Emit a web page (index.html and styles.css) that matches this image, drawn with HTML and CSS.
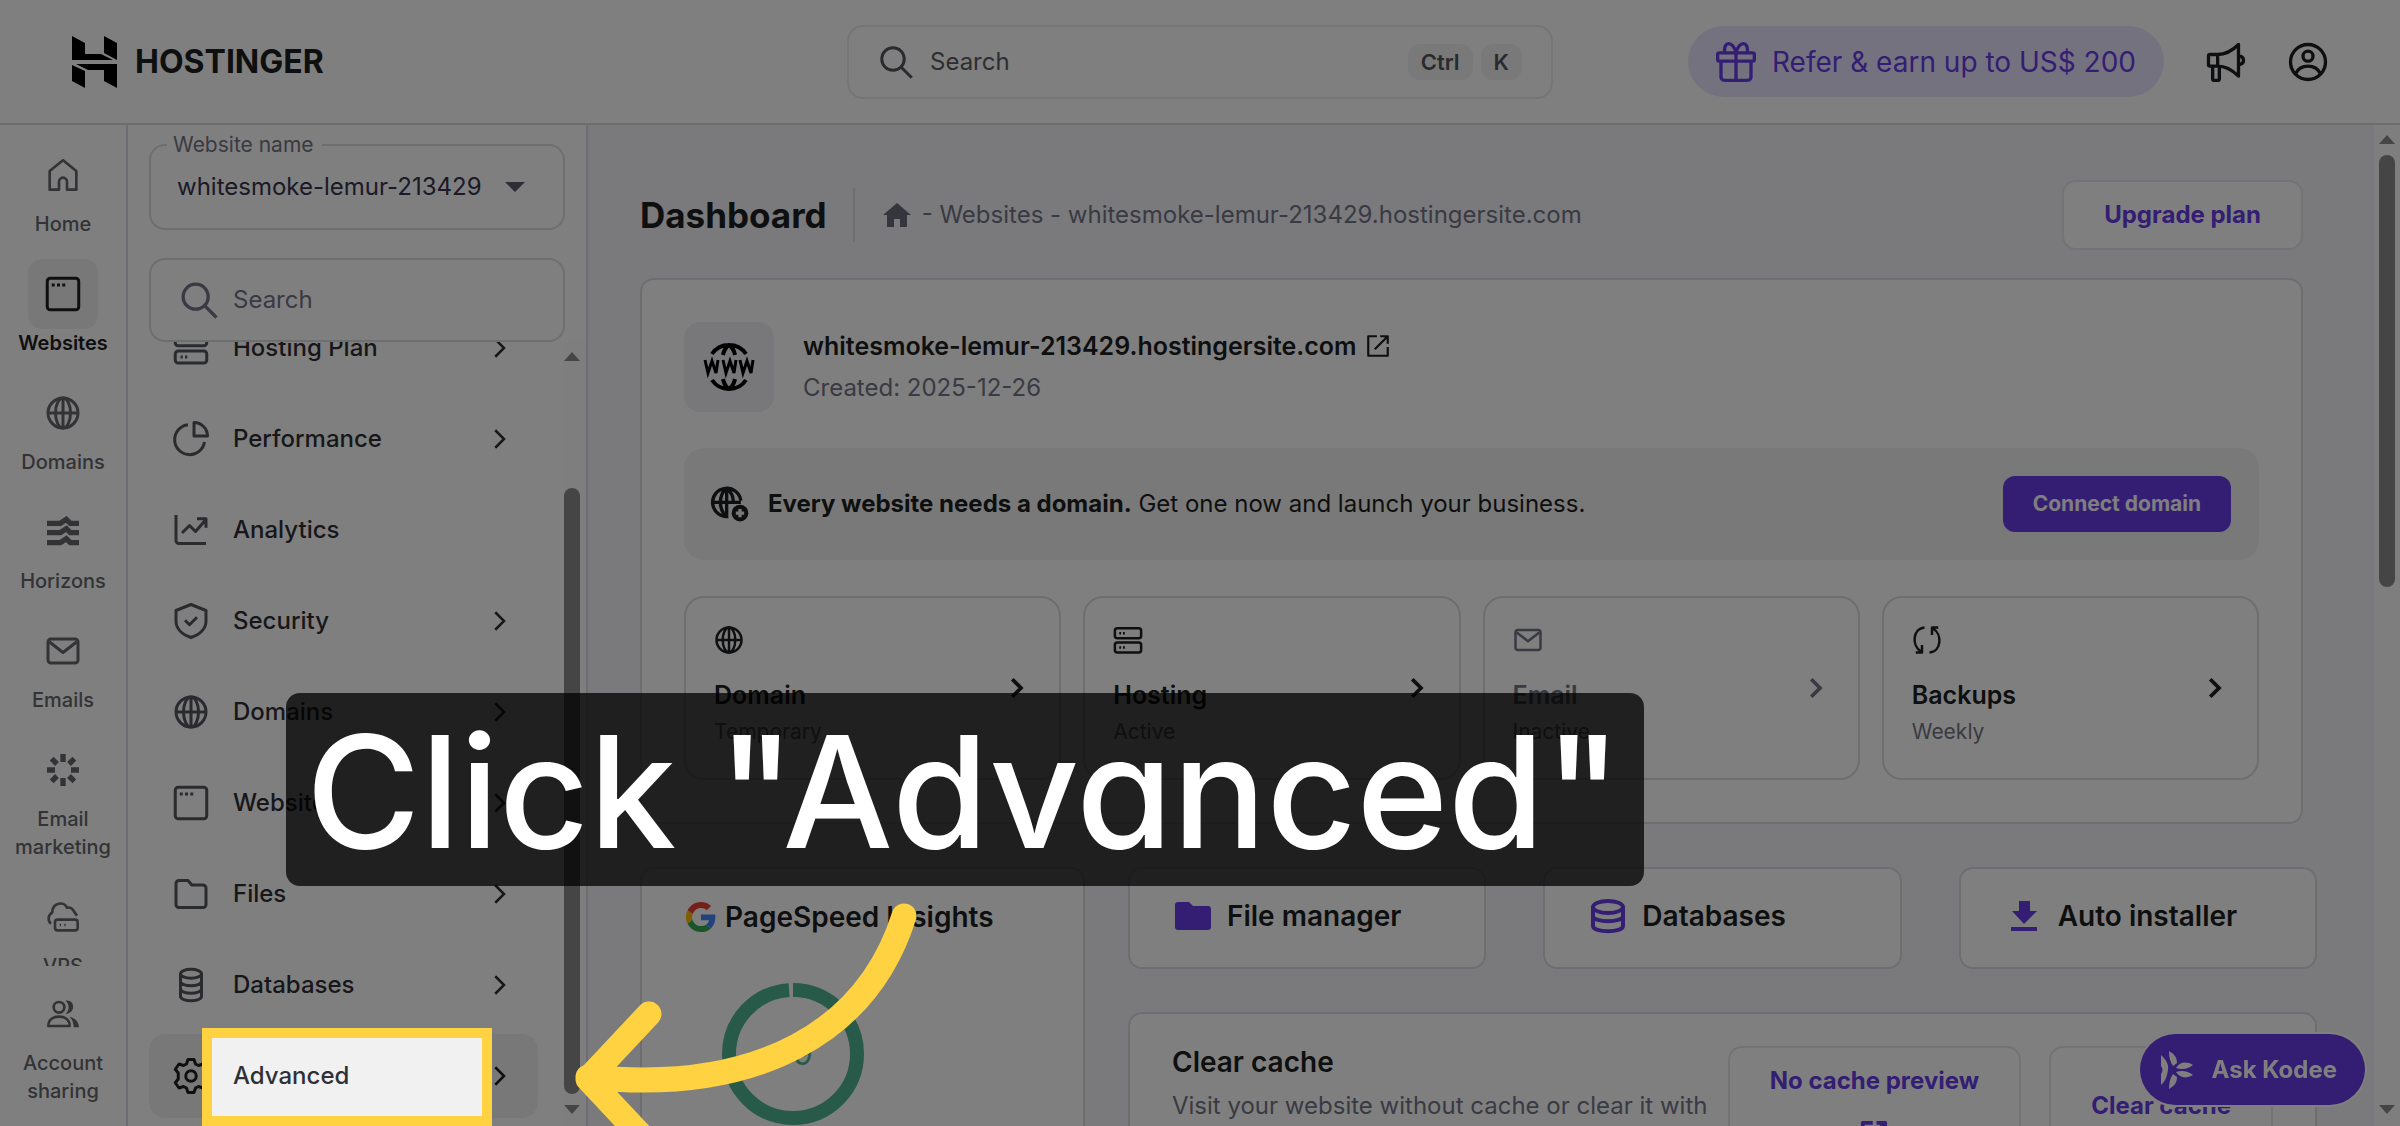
FILE: index.html
```html
<!DOCTYPE html>
<html lang="en">
<head>
    <meta charset="UTF-8">
    <meta name="viewport" content="width=device-width, initial-scale=1.0">
    <title>Dashboard - Hostinger</title>
    <link rel="stylesheet" href="styles.css">
</head>
<body>
    <!-- Shared icons -->
    <svg class="sprite" aria-hidden="true">
        <symbol id="i-search" viewBox="0 0 24 24"><circle cx="10" cy="10" r="7.5"/><path d="M15.5 15.5l7 7"/></symbol>
        <symbol id="i-chevron" viewBox="0 0 24 24"><path d="M9 5l7 7-7 7"/></symbol>
        <symbol id="i-globe" viewBox="0 0 24 24"><circle cx="12" cy="12" r="10"/><ellipse cx="12" cy="12" rx="5" ry="10"/><path d="M12 2v20M2 12h20"/></symbol>
        <symbol id="i-window" viewBox="0 0 24 24"><rect x="1.500" y="1.500" width="21" height="21" rx="2"/><path d="M4.500 6h2M8 6h2M11.500 6h2"/></symbol>
        <symbol id="i-mail" viewBox="0 0 24 24"><rect x="2" y="4" width="20" height="16" rx="2"/><path d="M3 6l9 7 9-7"/></symbol>
        <symbol id="i-server" viewBox="0 0 24 24"><rect x="1.500" y="2.500" width="21" height="8" rx="2"/><rect x="1.500" y="14" width="21" height="8" rx="2"/><path d="M5 6.500h1.500M8 6.500h1.500M5 18h1.500M8 18h1.500"/></symbol>
        <symbol id="i-external" viewBox="0 0 24 24"><path d="M11 3H3v18h18v-8M14 3h7v7M21 3L9 15"/></symbol>
    </svg>

    <header class="topbar">
        <a class="logo" href="#">
            <svg class="logo-mark" viewBox="0 0 45 52" aria-hidden="true">
                <path d="M0 0l13 7v11h16l12 6H0z"/>
                <path d="M32 0l13 7v17l-13-7z"/>
                <path d="M45 52l-13-7V34H16L4 28h41z"/>
                <path d="M13 52L0 45V29l13 6z"/>
            </svg>
            <span>HOSTINGER</span>
        </a>
        <label class="top-search">
            <svg class="icon icon-lg"><use href="#i-search"/></svg>
            <input type="text" placeholder="Search" aria-label="Search">
            <kbd>Ctrl</kbd><kbd>K</kbd>
        </label>
        <div class="top-actions">
            <button class="refer">
                <svg class="icon icon-xl" viewBox="0 0 24 24"><rect x="1" y="6.500" width="22" height="5" rx="1"/><path d="M3 11.500V21a2 2 0 0 0 2 2h14a2 2 0 0 0 2-2v-9.500M12 6.500V23M12 6.500C11 3 9.500 1 7.500 1S5 4 5 6.500M12 6.500C13 3 14.500 1 16.500 1S19 4 19 6.500"/></svg>
                Refer &amp; earn up to US$ 200
            </button>
            <button class="icon-button" aria-label="News">
                <svg class="icon icon-xl" viewBox="0 0 24 24"><path d="M7 7.500H2.500a1 1 0 0 0-1 1v5a1 1 0 0 0 1 1H7zM7 7.500c5 0 9-2.500 12.500-6v19c-3.500-3.500-7.500-6-12.500-6M4 14.500V22a1 1 0 0 0 1 1h2a1 1 0 0 0 1-1v-7.500M19.500 8.500c2 0 3 1 3 2.500s-1 2.500-3 2.500"/></svg>
            </button>
            <button class="icon-button" aria-label="Account">
                <svg class="icon icon-xl" viewBox="0 0 24 24"><circle cx="12" cy="12" r="10.500"/><circle cx="12" cy="8.500" r="3"/><path d="M4.500 19c1.500-3 4-4.500 7.500-4.500s6 1.500 7.500 4.500"/></svg>
            </button>
        </div>
    </header>

    <div class="layout">
        <nav class="rail">
            <div class="rail-list">
                <a class="rail-item" href="#">
                    <span class="rail-tile"><svg class="icon" viewBox="0 0 24 24"><path d="M2 9l10-8 10 8v14h-7v-6a3 3 0 0 0-6 0v6H2z"/></svg></span>Home
                </a>
                <a class="rail-item active" href="#">
                    <span class="rail-tile"><svg class="icon icon-lg"><use href="#i-window"/></svg></span>Websites
                </a>
                <a class="rail-item" href="#">
                    <span class="rail-tile"><svg class="icon icon-lg"><use href="#i-globe"/></svg></span>Domains
                </a>
                <a class="rail-item" href="#">
                    <span class="rail-tile"><svg class="icon thick" viewBox="0 0 24 24"><path d="M0 5.500h10l4.500-3 3 3H24M0 12.500h10l4.500-3 3 3H24M0 20h10l4.500-3 3 3H24"/></svg></span>Horizons
                </a>
                <a class="rail-item" href="#">
                    <span class="rail-tile"><svg class="icon icon-lg"><use href="#i-mail"/></svg></span>Emails
                </a>
                <a class="rail-item" href="#">
                    <span class="rail-tile"><svg class="icon thicker" viewBox="0 0 24 24"><path d="M12 0v6M12 18v6M0 12h6M18 12h6M3.500 3.500l4 4M16.500 16.500l4 4M3.500 20.500l4-4M16.500 7.500l4-4"/></svg></span>Email marketing
                </a>
                <a class="rail-item" href="#">
                    <span class="rail-tile"><svg class="icon" viewBox="0 0 24 24"><rect x="6" y="14" width="17" height="8" rx="2"/><path d="M3 17C1 15.500 0 11 4 8.500 4 1 13 0 15 5c4-1 5 3 7.500 6M9.500 18h1M13 18h1"/></svg></span>VPS
                </a>
            </div>
            <div class="rail-foot">
                <a class="rail-item" href="#">
                    <span class="rail-tile"><svg class="icon" viewBox="0 0 24 24"><circle cx="9" cy="7" r="4"/><path d="M1 21c0-5 4-7 8-7s8 2 8 7z"/><path class="solid" d="M14 2c7-1 8 9 0 10 3-3 3-7 0-10zM17 14c4 1 7 4 7 8h-4c0-3-1-6-3-8z"/></svg></span>Account sharing
                </a>
            </div>
        </nav>

        <aside class="panel">
            <div class="panel-top">
                <fieldset class="site-field">
                    <legend><label for="site">Website name</label></legend>
                    <div class="site-row">
                        <select id="site"><option>whitesmoke-lemur-213429.hostingersite.com</option></select>
                        <svg class="caret" viewBox="0 0 20 10"><path d="M0 0h20L10 10z"/></svg>
                    </div>
                </fieldset>
                <label class="panel-search">
                    <svg class="icon icon-xl"><use href="#i-search"/></svg>
                    <input type="text" placeholder="Search" aria-label="Search menu">
                </label>
            </div>
            <div class="menu-area">
                <nav class="menu">
                    <a href="#"><svg class="icon icon-lg"><use href="#i-server"/></svg><span>Hosting Plan</span><svg class="icon chevron"><use href="#i-chevron"/></svg></a>
                    <a href="#"><svg class="icon icon-lg" viewBox="0 0 24 24"><path d="M10 2.500A10 10 0 1 0 21 14M14 1v9h9A9 9 0 0 0 14 1z"/></svg><span>Performance</span><svg class="icon chevron"><use href="#i-chevron"/></svg></a>
                    <a href="#"><svg class="icon icon-lg" viewBox="0 0 24 24"><path d="M2 2v17a2 2 0 0 0 2 2h18M6 14l5-5 4 4 7-8M16 4.500h6v6"/></svg><span>Analytics</span></a>
                    <a href="#"><svg class="icon icon-lg" viewBox="0 0 24 24"><path d="M12 1l10 4v7c0 5-4 9-10 11C6 21 2 17 2 12V5zM8 11.500l3 3 5-5"/></svg><span>Security</span><svg class="icon chevron"><use href="#i-chevron"/></svg></a>
                    <a href="#"><svg class="icon icon-lg"><use href="#i-globe"/></svg><span>Domains</span><svg class="icon chevron"><use href="#i-chevron"/></svg></a>
                    <a href="#"><svg class="icon icon-lg"><use href="#i-window"/></svg><span>Website</span><svg class="icon chevron"><use href="#i-chevron"/></svg></a>
                    <a href="#"><svg class="icon icon-lg" viewBox="0 0 24 24"><path d="M2 5a2 2 0 0 1 2-2h6l2.500 3H20a2 2 0 0 1 2 2v11a2 2 0 0 1-2 2H4a2 2 0 0 1-2-2z"/></svg><span>Files</span><svg class="icon chevron"><use href="#i-chevron"/></svg></a>
                    <a href="#"><svg class="icon icon-lg" viewBox="0 0 24 24"><ellipse cx="12" cy="4.500" rx="7" ry="3"/><path d="M5 4.500v15c0 4 14 4 14 0v-15M5 9.500c0 4 14 4 14 0M5 14.500c0 4 14 4 14 0"/></svg><span>Databases</span><svg class="icon chevron"><use href="#i-chevron"/></svg></a>
                    <a class="active" href="#"><svg class="icon icon-lg" viewBox="0 0 24 24"><circle cx="12" cy="12" r="3.500"/><path d="M10 1h4l1 3 2 1 3-1 2.500 3.500L20.500 10v4l2 2.500L20 20l-3-1-2 1-1 3h-4l-1-3-2-1-3 1-2.500-3.500 2-2.500v-4l-2-2.500L4 4l3 1 2-1z"/></svg><span>Advanced</span><svg class="icon chevron"><use href="#i-chevron"/></svg></a>
                </nav>
                <div class="scrollbar" aria-hidden="true">
                    <span class="arrow-up"></span>
                    <span class="track"><span class="thumb thumb-menu"></span></span>
                    <span class="arrow-down"></span>
                </div>
            </div>
        </aside>

        <main class="content">
            <div class="page-head">
                <h1>Dashboard</h1>
                <div class="breadcrumb">
                    <svg class="home-icon" viewBox="0 0 28 24"><path d="M14 0l14 12h-4v12h-7v-8h-6v8H4V12H0z"/></svg>
                    <span>- Websites - whitesmoke-lemur-213429.hostingersite.com</span>
                </div>
                <button class="btn-outline">Upgrade plan</button>
            </div>

            <section class="card site-card">
                <div class="site-info">
                    <div class="www-tile">
                        <svg viewBox="0 0 52 48" aria-hidden="true">
                            <path class="www-globe" d="M9 11C13 5 19 2 26 2s13 3 17 9M20 12c1-5 3-8 6-10 3 2 5 5 6 10M9 37c4 6 10 9 17 9s13-3 17-9M20 36c1 5 3 8 6 10 3-2 5-5 6-10"/>
                            <path class="www-line" d="M2 17l3 13 4-12 4 12 2-13M20 17l3 13 4-12 4 12 2-13M37 17l3 13 4-12 4 12 2-13"/>
                        </svg>
                    </div>
                    <div>
                        <a class="site-name" href="#">whitesmoke-lemur-213429.hostingersite.com <svg class="icon icon-sm"><use href="#i-external"/></svg></a>
                        <p class="muted created">Created: 2025-12-26</p>
                    </div>
                </div>

                <div class="banner">
                    <svg class="icon icon-xl" viewBox="0 0 24 24"><path d="M18.500 10A8.500 8.500 0 1 0 11 19.500M1.500 11h17M10 2.500v17M10 2.500c-5 4-5 13 0 17M10 2.500c3 2.500 4 5 4 8"/><circle class="solid" cx="18" cy="17.500" r="5"/><path class="plus" d="M18 15v5M15.500 17.500h5"/></svg>
                    <p><b>Every website needs a domain.</b> Get one now and launch your business.</p>
                    <button class="btn-primary">Connect domain</button>
                </div>

                <div class="tiles">
                    <a class="tile" href="#">
                        <svg class="icon icon-md"><use href="#i-globe"/></svg>
                        <b>Domain</b><small>Temporary</small>
                        <svg class="icon chevron"><use href="#i-chevron"/></svg>
                    </a>
                    <a class="tile" href="#">
                        <svg class="icon icon-md"><use href="#i-server"/></svg>
                        <b>Hosting</b><small>Active</small>
                        <svg class="icon chevron"><use href="#i-chevron"/></svg>
                    </a>
                    <a class="tile inactive" href="#">
                        <svg class="icon icon-md"><use href="#i-mail"/></svg>
                        <b>Email</b><small>Inactive</small>
                        <svg class="icon chevron"><use href="#i-chevron"/></svg>
                    </a>
                    <a class="tile" href="#">
                        <svg class="icon icon-md" viewBox="0 0 24 24"><path d="M10 2C0 3 0 17 7 21M3 22h5v-6M14 22c10-1 10-15 3-19M21 2h-5v6"/></svg>
                        <b>Backups</b><small>Weekly</small>
                        <svg class="icon chevron"><use href="#i-chevron"/></svg>
                    </a>
                </div>
            </section>

            <div class="lower">
                <section class="card pagespeed">
                    <h2>
                        <svg class="google" viewBox="0 0 48 48" aria-hidden="true">
                            <path fill="#ea4335" d="M24 9.500c3.500 0 6.700 1.200 9.200 3.600l6.900-6.900C35.900 2.400 30.500 0 24 0 14.600 0 6.500 5.400 2.600 13.200l8 6.200C12.400 13.700 17.700 9.500 24 9.500z"/>
                            <path fill="#4285f4" d="M47 24.500c0-1.600-.2-3.100-.4-4.500H24v9h12.900c-.6 3-2.300 5.500-4.800 7.200l7.700 6C44.400 38 47 31.800 47 24.500z"/>
                            <path fill="#fbbc05" d="M10.500 28.600a14.500 14.500 0 0 1 0-9.200l-8-6.200a24 24 0 0 0 0 21.600z"/>
                            <path fill="#34a853" d="M24 48c6.500 0 11.900-2.100 15.900-5.800l-7.700-6c-2.200 1.500-5 2.300-8.200 2.300-6.300 0-11.600-4.200-13.500-9.900l-8 6.200C6.500 42.600 14.600 48 24 48z"/>
                        </svg>
                        PageSpeed Insights
                    </h2>
                    <div class="score">
                        <svg viewBox="0 0 142 142" aria-hidden="true"><circle cx="71" cy="71" r="64" pathLength="100" stroke-dasharray="99 1" transform="rotate(-90 71 71)"/></svg>
                        <span>99</span>
                    </div>
                </section>

                <div class="lower-right">
                    <div class="shortcuts">
                        <a class="card shortcut" href="#"><svg class="shortcut-icon solid" viewBox="0 0 36 36"><path d="M0 7a3 3 0 0 1 3-3h11l4 4h15a3 3 0 0 1 3 3v18a3 3 0 0 1-3 3H3a3 3 0 0 1-3-3z"/></svg>File manager</a>
                        <a class="card shortcut" href="#"><svg class="shortcut-icon" viewBox="0 0 36 36"><ellipse cx="18" cy="9" rx="15" ry="6"/><path d="M3 9v19c0 7 30 7 30 0V9M3 18c0 7 30 7 30 0"/></svg>Databases</a>
                        <a class="card shortcut" href="#"><svg class="shortcut-icon solid" viewBox="0 0 36 36"><path d="M13 3h11v10h7L18 26 6 13h7zM5 29h26v4H5z"/></svg>Auto installer</a>
                    </div>
                    <section class="card cache">
                        <div class="cache-text">
                            <h2>Clear cache</h2>
                            <p class="muted">Visit your website without cache or clear it with</p>
                        </div>
                        <button class="btn-outline cache-preview">No cache preview <svg class="icon icon-md"><use href="#i-external"/></svg></button>
                        <button class="btn-outline">Clear cache</button>
                    </section>
                </div>
            </div>
        </main>

        <div class="scrollbar page-scroll" aria-hidden="true">
            <span class="arrow-up"></span>
            <span class="track"><span class="thumb thumb-page"></span></span>
            <span class="arrow-down"></span>
        </div>
    </div>

    <button class="kodee">
        <svg viewBox="0 0 34 38" aria-hidden="true"><path d="M1 4c5 5 8 9 7 15s-2 10-7 15V23c2-3 2-5 0-8zM9 0c5 3 8 6 8 12l-4 3c-3-4-4-9-4-15zM9 38c5-3 8-6 8-12l-4-3c-3 4-4 9-4 15zM16 17c4-6 10-7 17-3-5 4-11 5-17 3zM16 21c4 6 10 7 17 3-5-4-11-5-17-3z"/></svg>
        Ask Kodee
    </button>

    <!-- Tutorial step: spotlight, caption and arrow -->
    <div class="tour">
        <div class="spotlight"></div>
        <div class="caption">Click "Advanced"</div>
        <svg class="pointer" viewBox="570 890 350 236" aria-hidden="true">
            <path d="M904 916C868 1030 760 1095 588 1077M649 1014l-61 65 61 65"/>
        </svg>
    </div>
</body>
</html>
```
FILE: styles.css
```css
* {
    box-sizing: border-box;
}
body {
    display: flex;
    flex-direction: column;
    height: 100vh;
    margin: 0;
    overflow: hidden;
    font-family: Inter, "Open Sans", sans-serif;
    font-size: 24px;
    line-height: 36px;
    color: #1d1e20;
    background: #fff;
}
h1, h2, p, fieldset, legend {
    margin: 0;
    padding: 0;
}
a {
    color: inherit;
    text-decoration: none;
}
button, input, select {
    font: inherit;
    color: inherit;
    border: none;
    background: none;
    padding: 0;
}
input {
    flex: 1;
    min-width: 0;
}
.sprite {
    display: none;
}
.icon {
    width: 32px;
    height: 32px;
    flex-shrink: 0;
    fill: none;
    stroke: currentColor;
    stroke-width: 2;
    stroke-linejoin: round;
}
.icon-sm {
    width: 26px;
    height: 26px;
}
.icon-md {
    width: 30px;
    height: 30px;
}
.icon-lg {
    width: 36px;
    height: 36px;
}
.icon-xl {
    width: 40px;
    height: 40px;
}
.icon .solid {
    fill: currentColor;
    stroke: none;
}
.thick {
    stroke-width: 4;
    stroke-linejoin: miter;
}
.thicker {
    stroke-width: 4;
}
.muted {
    color: #727586;
}

/* Top bar */
.topbar {
    display: grid;
    grid-template-columns: 1fr 706px 1fr;
    align-items: center;
    height: 125px;
    flex-shrink: 0;
    padding: 0 72px;
    border-bottom: 2px solid #dadce0;
}
.logo {
    display: flex;
    align-items: center;
    gap: 18px;
    font-size: 32px;
    font-weight: 700;
}
.logo-mark {
    width: 45px;
    height: 52px;
}
.top-search {
    display: flex;
    align-items: center;
    height: 74px;
    padding: 0 29px;
    border: 2px solid #eaeaec;
    border-radius: 16px;
    color: #55565c;
}
.top-search input {
    margin-left: 16px;
}
input::placeholder {
    color: #727586;
    opacity: 1;
}
.top-search input::placeholder {
    color: #5c5d64;
}
kbd {
    margin-left: 8px;
    padding: 0 13px;
    border-radius: 12px;
    background: #f2f2f2;
    font-family: inherit;
    font-size: 22px;
    font-weight: 600;
}
.top-actions {
    display: flex;
    align-items: center;
    justify-content: flex-end;
    gap: 42px;
}
.refer {
    display: flex;
    align-items: center;
    gap: 16px;
    height: 71px;
    padding: 0 28px;
    border-radius: 36px;
    background: #ebe4ff;
    color: #673de6;
    font-size: 28px;
    white-space: nowrap;
}
.icon-button {
    display: flex;
}

/* Left rail */
.layout {
    display: flex;
    flex: 1;
    min-height: 0;
}
.rail {
    display: flex;
    flex-direction: column;
    width: 128px;
    flex-shrink: 0;
    border-right: 2px solid #dadce8;
    font-size: 20px;
    line-height: 28px;
    font-weight: 500;
    text-align: center;
    color: #66676d;
}
.rail-list {
    display: flex;
    flex-direction: column;
    flex: 1;
    gap: 21px;
    min-height: 0;
    padding-top: 15px;
    overflow: hidden;
}
.rail-foot {
    padding: 13px 0 21px;
}
.rail-item {
    display: flex;
    flex-direction: column;
    align-items: center;
}
.rail-tile {
    display: grid;
    place-items: center;
    width: 70px;
    height: 70px;
    border-radius: 14px;
}
.rail-item.active {
    color: #1d1e20;
    font-weight: 600;
}
.rail-item.active .rail-tile {
    background: #f1f1f2;
}

/* Website menu */
.panel {
    display: flex;
    flex-direction: column;
    width: 460px;
    flex-shrink: 0;
    border-right: 2px solid #dadce0;
}
.panel-top {
    display: flex;
    flex-direction: column;
    gap: 28px;
    padding: 4px 21px 0;
}
.site-field {
    min-width: 0;
    height: 101px;
    padding: 0 38px 0 26px;
    border: 2px solid #dadce0;
    border-radius: 16px;
    color: #36344d;
}
.site-field legend {
    margin-left: -10px;
    padding: 0 8px 0 6px;
    color: #727586;
    font-size: 21px;
    line-height: 32px;
}
.site-row {
    display: flex;
    align-items: center;
    height: 52px;
}
.site-field select {
    flex: 1;
    min-width: 0;
    margin-right: 24px;
    appearance: none;
    text-overflow: clip;
}
.caret {
    width: 20px;
    height: 10px;
    fill: #5b5d6c;
}
.panel-search {
    display: flex;
    align-items: center;
    gap: 14px;
    height: 84px;
    padding: 0 28px;
    border: 2px solid #dadce0;
    border-radius: 16px;
    color: #727586;
}
.menu-area {
    display: flex;
    flex: 1;
    min-height: 0;
}
.menu {
    display: flex;
    flex-direction: column;
    justify-content: flex-end;
    flex: 1;
    gap: 7px;
    padding: 0 26px 8px 21px;
    overflow: hidden;
}
.menu a {
    display: flex;
    align-items: center;
    flex-shrink: 0;
    gap: 24px;
    height: 84px;
    padding: 0 24px;
    border-radius: 16px;
    font-weight: 500;
    color: #2f2f36;
}
.menu span {
    flex: 1;
}
.menu .icon-lg {
    color: #55565c;
}
.menu .active {
    background: #f1f1f2;
}
.menu .active .icon {
    color: #1d1e20;
}
.chevron {
    width: 30px;
    height: 30px;
    stroke-width: 3;
    stroke-linejoin: miter;
}
.menu .chevron {
    stroke-width: 2;
}

/* Scroll bars */
.scrollbar {
    display: flex;
    flex-direction: column;
    align-items: center;
    width: 26px;
    flex-shrink: 0;
    padding: 10px 0 12px;
    background: #fdfdfd;
}
.menu-area .scrollbar {
    width: 22px;
    padding-right: 6px;
}
.arrow-up, .arrow-down {
    border: 8px solid transparent;
}
.arrow-up {
    border-top: none;
    border-bottom: 9px solid #8b8b8b;
}
.arrow-down {
    border-bottom: none;
    border-top: 9px solid #8b8b8b;
}
.track {
    display: flex;
    flex-direction: column;
    flex: 1;
    width: 16px;
    padding: 11px 0;
}
.thumb {
    border-radius: 8px;
    background: #8b8b8b;
}
.thumb-menu {
    height: 84%;
    margin-top: auto;
}
.thumb-page {
    height: 46%;
}

/* Dashboard */
.content {
    flex: 1;
    min-width: 0;
    padding: 55px 71px 0 52px;
    background: #f4f4f8;
    overflow: hidden;
}
.page-head {
    display: flex;
    align-items: center;
    gap: 26px;
    margin-bottom: 28px;
}
h1 {
    font-size: 35px;
    line-height: 54px;
    font-weight: 700;
}
.breadcrumb {
    display: flex;
    align-items: center;
    flex: 1;
    gap: 11px;
    height: 54px;
    padding-left: 28px;
    border-left: 2px solid #dadce0;
    color: #727586;
}
.home-icon {
    width: 28px;
    height: 24px;
    fill: #6a6c7b;
}
.btn-outline {
    height: 70px;
    padding: 0 40px;
    border: 2px solid #e6e6ea;
    border-radius: 14px;
    background: #fff;
    color: #673de6;
    font-weight: 700;
    white-space: nowrap;
}
.card {
    border: 2px solid #dadce0;
    border-radius: 14px;
    background: #fff;
}
.site-card {
    padding: 42px;
}
.site-info {
    display: flex;
    align-items: center;
    gap: 29px;
}
.www-tile {
    display: grid;
    place-items: center;
    width: 90px;
    height: 90px;
    border-radius: 16px;
    background: #f1f1f5;
}
.www-tile svg {
    width: 52px;
    height: 48px;
}
.www-globe, .www-line {
    fill: none;
    stroke: #000;
    stroke-width: 4;
}
.www-line {
    stroke-width: 3;
}
.site-name {
    display: flex;
    align-items: center;
    gap: 8px;
    font-size: 25px;
    font-weight: 600;
    line-height: 42px;
}
.created {
    line-height: 42px;
}
.banner {
    display: flex;
    align-items: center;
    gap: 18px;
    height: 112px;
    margin: 36px 0;
    padding: 0 28px 0 26px;
    border-radius: 20px;
    background: #f2f2f3;
}
.banner p {
    flex: 1;
}
.plus {
    stroke: #f2f2f3;
}
.btn-primary {
    height: 56px;
    padding: 0 30px;
    border-radius: 12px;
    background: #673de6;
    color: #fff;
    font-size: 21px;
    font-weight: 700;
}
.tiles {
    display: grid;
    grid-template-columns: repeat(4, 1fr);
    gap: 22px;
}
.tile {
    display: grid;
    grid-template-columns: 1fr auto;
    grid-template-rows: 52px 36px 38px;
    align-items: center;
    height: 184px;
    padding: 27px 28px;
    border: 2px solid #dadce4;
    border-radius: 20px;
}
.tile > :first-child {
    align-self: start;
}
.tile b {
    grid-area: 2 / 1;
    font-size: 25px;
    font-weight: 600;
}
.tile small {
    grid-area: 3 / 1;
    color: #727586;
    font-size: 21px;
}
.tile .chevron {
    grid-area: 1 / 2 / 4 / 3;
}
.tile.inactive, .tile.inactive b {
    color: #727586;
}
.lower {
    display: grid;
    grid-template-columns: 445px 1fr;
    gap: 43px;
    margin: 43px -14px 0 0;
}
h2, .shortcut {
    font-size: 28px;
    line-height: 36px;
    font-weight: 600;
}
.pagespeed {
    height: 300px;
    padding: 30px 44px;
}
.pagespeed h2 {
    display: flex;
    align-items: center;
    gap: 9px;
    white-space: nowrap;
}
.google {
    width: 30px;
    height: 30px;
}
.score {
    display: grid;
    place-items: center;
    width: 142px;
    margin: 48px 0 0 36px;
    color: #50b492;
    font-size: 32px;
}
.score svg, .score span {
    grid-area: 1 / 1;
}
.score circle {
    fill: none;
    stroke: #50b492;
    stroke-width: 14;
}
.shortcuts {
    display: grid;
    grid-template-columns: repeat(3, 1fr);
    gap: 57px;
    margin-bottom: 43px;
}
.shortcut {
    display: flex;
    align-items: center;
    gap: 16px;
    height: 102px;
    padding: 0 45px 4px;
}
.shortcut-icon {
    width: 36px;
    height: 36px;
    fill: none;
    stroke: #673de6;
    stroke-width: 4;
}
.shortcut-icon.solid {
    fill: #673de6;
    stroke: none;
}
.cache {
    display: flex;
    align-items: center;
    height: 188px;
    padding: 0 42px;
}
.cache-text {
    flex: 1;
    align-self: flex-start;
    padding-top: 30px;
    min-width: 0;
    white-space: nowrap;
}
.cache-text p {
    margin-top: 8px;
}
.cache .btn-outline {
    height: 120px;
    margin-left: 28px;
}
.cache .cache-preview {
    display: flex;
    flex-direction: column;
    align-items: center;
    justify-content: flex-start;
    margin-left: 0;
    padding-top: 15px;
}
.cache-preview .icon {
    margin-top: 20px;
    stroke-width: 3;
}
.kodee {
    position: fixed;
    right: 35px;
    bottom: 21px;
    display: flex;
    align-items: center;
    gap: 18px;
    height: 71px;
    padding: 0 28px 0 20px;
    border-radius: 36px;
    background: #673de6;
    box-shadow: 0 0 0 2px #fff;
    color: #fff;
    font-weight: 700;
}
.kodee svg {
    width: 34px;
    height: 38px;
    fill: #fff;
}

/* Tutorial overlay */
.tour {
    position: fixed;
    inset: 0;
    overflow: hidden;
}
.spotlight {
    position: absolute;
    left: 202px;
    bottom: 0;
    width: 290px;
    height: 98px;
    border: 10px solid #ffd242;
    box-shadow: 0 0 0 3000px rgba(0, 0, 0, 0.5);
}
.caption {
    position: absolute;
    left: 286px;
    top: 693px;
    padding: 4px 20px 0;
    width: 1358px;
    border-radius: 14px;
    background: rgba(0, 0, 0, 0.75);
    color: #fff;
    font-size: 156px;
    font-weight: 500;
    font-feature-settings: "cv11";
    line-height: 189px;
    white-space: nowrap;
}
.pointer {
    position: absolute;
    left: 570px;
    bottom: 0;
    width: 350px;
    height: 236px;
    fill: none;
    stroke: #ffd242;
    stroke-width: 25;
    stroke-linecap: round;
    stroke-linejoin: round;
}
```
